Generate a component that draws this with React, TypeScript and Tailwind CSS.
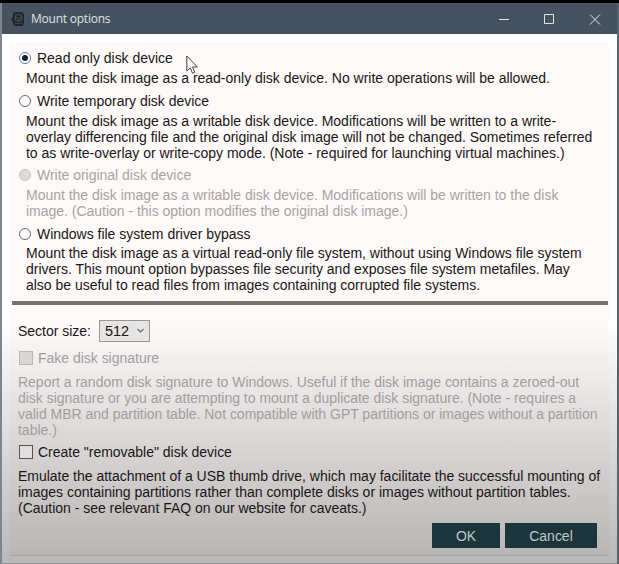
import React from "react";

function Lines({ rows, className = "" }: { rows: string[]; className?: string }) {
  return (
    <div className={className}>
      {rows.map((text) => (
        <div key={text} className="h-4">
          {text}
        </div>
      ))}
    </div>
  );
}

function Radio({ label, state = "off" }: { label: string; state?: "on" | "off" | "disabled" }) {
  const disabled = state === "disabled";
  return (
    <div className={`flex h-4 items-center pl-[9px] ${disabled ? "text-[#a7a3a3]" : ""}`}>
      <span
        className={`mr-[6px] flex size-[12px] items-center justify-center rounded-full border ${
          disabled ? "border-[#c6c2c2] bg-[#dedada]" : state === "on" ? "border-[#5f80b4] bg-white" : "border-[#6a6868] bg-white"
        }`}
      >
        {state === "on" && <span className="size-[6px] rounded-full bg-[#18202c]" />}
      </span>
      <span>{label}</span>
    </div>
  );
}

function Check({ label, disabled = false }: { label: string; disabled?: boolean }) {
  return (
    <div className={`flex h-4 items-center pl-[9px] ${disabled ? "text-[#a09d9d]" : ""}`}>
      <span className={`mr-[5px] size-[14px] border ${disabled ? "border-[#b9b6b6] bg-[#d9d6d6]" : "border-[#555] bg-[#e1dede]"}`} />
      <span>{label}</span>
    </div>
  );
}

export default function App() {
  return (
    <div className="relative flex h-[564px] w-[619px] flex-col overflow-hidden bg-black pt-[3px] font-['Liberation_Sans',Arial,sans-serif] text-[14px] leading-4 tracking-[-0.016px] whitespace-nowrap text-[#181616]">
      <div className="flex flex-1 flex-col border-x-2 border-r-[#56626c] border-l-[#7d858e]">
        <header className="flex h-[31px] shrink-0 items-center bg-[#475261] pl-[8px] text-[#dfe3e7]">
          <svg width="16" height="16" viewBox="0 0 16 16" fill="none" className="mr-[5px]">
            <path d="M3 2.5 5 1h7l2 2v10l-2 2H5l-2-2v-2L.5 8 3 6z" fill="#20262c" />
            <circle cx="8.5" cy="7" r="3.5" stroke="#4b555f" />
            <path d="M5 5.5 8.5 8 12 5.5M7 9h3" stroke="#4b555f" />
            <path d="M5 3h1M11 3h1M5 12.500h7" stroke="#3c454e" />
          </svg>
          <span className="flex-1 font-['Open_Sans','Noto_Sans',sans-serif] text-[12px] tracking-[-0.23px]">Mount options</span>
          <svg width="120" height="30" viewBox="0 0 120 30" fill="none" stroke="#dfe3e7" className="shrink-0">
            <path d="M2 15.500h10M47.500 10.500h9v9h-9zM93 10.500l10 10M103 10.500l-10 10" />
          </svg>
        </header>

        <main className="flex flex-1 flex-col border-b border-[#8e8e8e] bg-linear-to-b from-white from-54% to-[#b9b9b9] px-[8px] pt-[8px] pb-[7px]">
          <div className="flex flex-1 flex-col border-b border-[#a5a2a2] bg-linear-to-b from-[#fffafa] from-55% to-[#b9b5b5]">
            <section className="mr-[1px] ml-[2px] h-[263px] border-b-4 border-[#777272] pt-[8px]">
              <div className="-ml-[2px]">
                <Radio label="Read only disk device" state="on" />
                <Lines className="mt-[4px] pl-4" rows={["Mount the disk image as a read-only disk device. No write operations will be allowed."]} />
                <div className="h-[7px]" />
                <Radio label="Write temporary disk device" />
                <Lines
                  className="mt-[4px] pl-4"
                  rows={[
                    "Mount the disk image as a writable disk device. Modifications will be written to a write-",
                    "overlay differencing file and the original disk image will not be changed. Sometimes referred",
                    "to as write-overlay or write-copy mode. (Note - required for launching virtual machines.)",
                  ]}
                />
                <div className="h-[6px]" />
                <Radio label="Write original disk device" state="disabled" />
                <Lines
                  className="mt-[4px] pl-4 text-[#a7a3a3]"
                  rows={[
                    "Mount the disk image as a writable disk device. Modifications will be written to the disk",
                    "image. (Caution - this option modifies the original disk image.)",
                  ]}
                />
                <div className="h-[7px]" />
                <Radio label="Windows file system driver bypass" />
                <Lines
                  className="mt-[3px] pl-4"
                  rows={[
                    "Mount the disk image as a virtual read-only file system, without using Windows file system",
                    "drivers. This mount option bypasses file security and exposes file system metafiles. May",
                    "also be useful to read files from images containing corrupted file systems.",
                  ]}
                />
              </div>
            </section>

            <section className="flex flex-1 flex-col">
              <div className="mt-[15px] flex h-[22px] items-center pl-[8px]">
                <span className="w-[81px]">Sector size:</span>
                <span className="flex h-[22px] w-[51px] items-center justify-between border border-[#999696] bg-[#e7e4e4] pr-[4px] pl-[5px] text-[14.500px]">
                  512
                  <svg width="9" height="6" viewBox="0 0 9 6" fill="none" stroke="#666" strokeWidth="1.2">
                    <path d="m1.500 1 3 3 3-3" />
                  </svg>
                </span>
              </div>
              <div className="h-[8px]" />
              <Check label="Fake disk signature" disabled />
              <Lines
                className="mt-[8px] pl-[8px] text-[#a09d9d]"
                rows={[
                  "Report a random disk signature to Windows. Useful if the disk image contains a zeroed-out",
                  "disk signature or you are attempting to mount a duplicate disk signature. (Note - requires a",
                  "valid MBR and partition table. Not compatible with GPT partitions or images without a partition",
                  "table.)",
                ]}
              />
              <div className="h-[6px]" />
              <Check label={'Create "removable" disk device'} />
              <Lines
                className="mt-[8px] pl-[8px]"
                rows={[
                  "Emulate the attachment of a USB thumb drive, which may facilitate the successful mounting of",
                  "images containing partitions rather than complete disks or images without partition tables.",
                  "(Caution - see relevant FAQ on our website for caveats.)",
                ]}
              />
              <div className="mt-[7px] flex justify-end gap-[5px] pr-[12px] text-[#bfc8cb]">
                <button className="h-[25px] w-[68px] bg-[#1b353b]">OK</button>
                <button className="h-[25px] w-[92px] bg-[#1b353b]">Cancel</button>
              </div>
            </section>
          </div>
        </main>
      </div>

      <svg className="absolute top-[55px] left-[186px]" width="13" height="20" viewBox="0 0 13 20">
        <path d="M.8 1v15l3.400-3.100 2.300 5.300 2.300-1-2.300-5.200h4.800z" fill="#fffafa" stroke="#454343" />
      </svg>
    </div>
  );
}
